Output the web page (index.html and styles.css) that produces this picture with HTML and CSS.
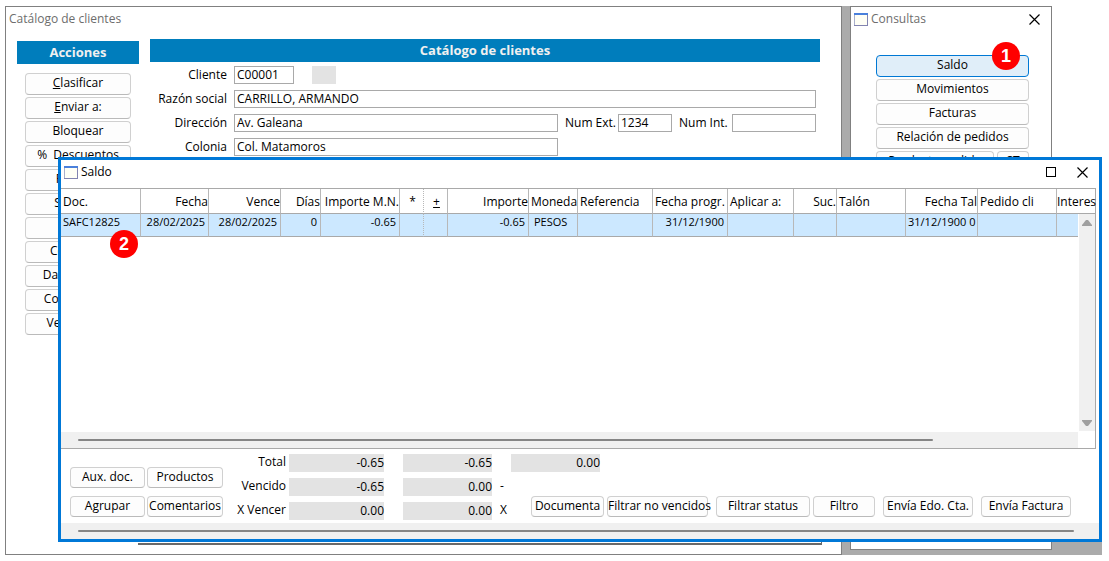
FILE: index.html
```html
<!DOCTYPE html>
<html lang="es">
<head>
    <meta charset="UTF-8">
    <meta name="viewport" content="width=device-width, initial-scale=1.0">
    <title>Catálogo de clientes</title>
    <link rel="stylesheet" href="styles.css">
</head>
<body>
    <div class="desktop">
        <div class="backdrop"></div>
        <div class="backdrop-strip"></div>

        <section class="window catalog">
            <div class="titlebar muted">Catálogo de clientes</div>
            <div class="catalog-body">
                <div class="actions">
                    <h2 class="banner">Acciones</h2>
                    <div class="action-list">
                        <button class="btn"><u>C</u>lasificar</button>
                        <button class="btn"><u>E</u>nviar a:</button>
                        <button class="btn">Bloquear</button>
                        <button class="btn">%&nbsp; Descuentos</button>
                        <button class="btn">Pedidos</button>
                        <button class="btn">Sucursal</button>
                        <button class="btn">Fax</button>
                        <button class="btn">Contactos</button>
                        <button class="btn">Datos extras</button>
                        <button class="btn">Condiciones</button>
                        <button class="btn">Ver archivo</button>
                    </div>
                </div>
                <div class="client">
                    <h1 class="banner">Catálogo de clientes</h1>
                    <form class="form">
                        <div class="row">
                            <label class="lead" for="cliente">Cliente</label>
                            <input class="w-code" id="cliente" value="C00001">
                            <span class="swatch"></span>
                        </div>
                        <div class="row">
                            <label class="lead" for="razon">Razón social</label>
                            <input class="grow" id="razon" value="CARRILLO, ARMANDO">
                        </div>
                        <div class="row">
                            <label class="lead" for="direccion">Dirección</label>
                            <input class="grow" id="direccion" value="Av. Galeana">
                            <div class="numbers">
                                <label class="w-num" for="numext">Num Ext.</label>
                                <input class="w-ext" id="numext" value="1234">
                                <label class="w-num" for="numint">Num Int.</label>
                                <input class="w-int" id="numint" value="">
                            </div>
                        </div>
                        <div class="row">
                            <label class="lead" for="colonia">Colonia</label>
                            <input class="grow" id="colonia" value="Col. Matamoros">
                            <div class="numbers"></div>
                        </div>
                    </form>
                    <div class="panel-edge"></div>
                </div>
            </div>
        </section>

        <section class="window queries">
            <div class="titlebar muted">
                <svg class="app-icon" width="14" height="13" viewBox="0 0 14 13"><rect width="14" height="13" fill="#8284b0"/><rect width="13" height="12" fill="#a9b0cc"/><rect x="1" y="2" width="12" height="10" fill="#fffff5"/><rect width="14" height="2" fill="#4a80dc"/></svg>
                <span>Consultas</span>
                <button class="win-btn" aria-label="Cerrar"><svg width="11" height="11" viewBox="0 0 11 11"><path d="M.5.5l10 10M10.5.5l-10 10" stroke="#000" stroke-width="1.2"/></svg></button>
            </div>
            <div class="query-list">
                <button class="btn active">Saldo</button>
                <button class="btn">Movimientos</button>
                <button class="btn">Facturas</button>
                <button class="btn">Relación de pedidos</button>
                <div class="pair">
                    <button class="btn">Producto pedido</button>
                    <button class="btn small">ST</button>
                </div>
            </div>
            <span class="badge badge-1">1</span>
        </section>

        <section class="dialog">
            <div class="titlebar">
                <svg class="app-icon" width="14" height="13" viewBox="0 0 14 13"><rect width="14" height="13" fill="#8284b0"/><rect width="13" height="12" fill="#a9b0cc"/><rect x="1" y="2" width="12" height="10" fill="#fffff5"/><rect width="14" height="2" fill="#4a80dc"/></svg>
                <span>Saldo</span>
                <button class="win-btn" aria-label="Maximizar"><svg width="10" height="10" viewBox="0 0 10 10"><rect x=".5" y=".5" width="9" height="9" fill="none" stroke="#000"/></svg></button>
                <button class="win-btn" aria-label="Cerrar"><svg width="11" height="11" viewBox="0 0 11 11"><path d="M.5.5l10 10M10.5.5l-10 10" stroke="#000" stroke-width="1.2"/></svg></button>
            </div>

            <div class="grid">
                <table>
                    <colgroup>
                        <col class="c-doc"><col class="c-fecha"><col class="c-vence"><col class="c-dias"><col class="c-mn">
                        <col class="c-mark"><col class="c-mark"><col class="c-imp"><col class="c-mon"><col class="c-ref">
                        <col class="c-ref"><col class="c-apl"><col class="c-suc"><col class="c-talon"><col class="c-vence">
                        <col class="c-ped"><col>
                    </colgroup>
                    <thead>
                        <tr>
                            <th>Doc.</th>
                            <th class="num">Fecha</th>
                            <th class="num">Vence</th>
                            <th class="num">Días</th>
                            <th class="num">Importe M.N.</th>
                            <th class="mid dotted">*</th>
                            <th class="mid"><u>+</u></th>
                            <th class="num">Importe</th>
                            <th>Moneda</th>
                            <th>Referencia</th>
                            <th>Fecha progr.</th>
                            <th>Aplicar a:</th>
                            <th class="num">Suc.</th>
                            <th>Talón</th>
                            <th class="num">Fecha Tal</th>
                            <th>Pedido cli</th>
                            <th>Interes</th>
                        </tr>
                    </thead>
                    <tbody>
                        <tr>
                            <td>SAFC12825</td>
                            <td class="num">28/02/2025</td>
                            <td class="num">28/02/2025</td>
                            <td class="num">0</td>
                            <td class="num">-0.65</td>
                            <td class="dotted"></td>
                            <td></td>
                            <td class="num">-0.65</td>
                            <td class="currency">PESOS</td>
                            <td></td>
                            <td class="num">31/12/1900</td>
                            <td></td>
                            <td></td>
                            <td></td>
                            <td class="num">31/12/1900 0</td>
                            <td></td>
                            <td></td>
                        </tr>
                    </tbody>
                </table>
                <div class="vscroll">
                    <svg width="10" height="6" viewBox="0 0 10 6"><path d="M4 0h2l4 5v1H0V5z" fill="#a0a0a0"/></svg>
                    <svg width="10" height="6" viewBox="0 0 10 6"><path d="M0 0h10v1L6 6H4L0 1z" fill="#a0a0a0"/></svg>
                </div>
                <div class="hscroll table-scroll"><div class="thumb"></div></div>
            </div>

            <div class="footer">
                <div class="doc-buttons">
                    <button class="btn">Aux. doc.</button>
                    <button class="btn">Productos</button>
                    <button class="btn">Agrupar</button>
                    <button class="btn">Comentarios</button>
                </div>
                <div class="totals">
                    <span class="name">Total</span><output>-0.65</output><output>-0.65</output><output>0.00</output>
                    <span class="name">Vencido</span><output>-0.65</output><output>0.00</output><span class="sign">-</span>
                    <span class="name">X Vencer</span><output>0.00</output><output>0.00</output><span class="sign">X</span>
                </div>
                <div class="filters">
                    <div class="group">
                        <button class="btn w-documenta">Documenta</button>
                        <button class="btn w-vencidos">Filtrar no vencidos</button>
                    </div>
                    <div class="group">
                        <button class="btn w-status">Filtrar status</button>
                        <button class="btn w-filtro">Filtro</button>
                    </div>
                    <button class="btn w-envia">Envía Edo. Cta.</button>
                    <button class="btn w-envia">Envía Factura</button>
                </div>
            </div>
            <div class="hscroll dialog-scroll"><div class="thumb"></div></div>
            <span class="badge badge-2">2</span>
        </section>
    </div>
</body>
</html>
```

FILE: styles.css
```css
* {
    box-sizing: border-box;
}
body {
    margin: 0;
    background: #fff;
    color: #000;
    font-family: "Segoe UI", "Open Sans", "Noto Sans", sans-serif;
    font-size: 12px;
    line-height: 16px;
}
button, input {
    font: inherit;
    color: inherit;
}
svg {
    display: block;
}

/* desktop and windows */
.desktop {
    position: relative;
    min-height: 100vh;
    overflow: hidden;
}
.backdrop {
    position: absolute;
    top: 6px;
    right: 57px;
    bottom: 6px;
    width: 210px;
    background: #ababab;
}
.backdrop-strip {
    position: absolute;
    right: 7px;
    bottom: 6px;
    width: 60px;
    height: 16px;
    background: #ababab;
}
.window {
    position: absolute;
    top: 6px;
    background: #fff;
    border: 1px solid #808080;
}
.catalog {
    left: 5px;
    right: 267px;
    bottom: 6px;
    display: flex;
    flex-direction: column;
}
.queries {
    right: 57px;
    bottom: 11px;
    width: 202px;
}
.titlebar {
    display: flex;
    align-items: center;
    gap: 3px;
    height: 24px;
    padding: 0 2px 0 3px;
}
.muted {
    color: #6d6d6d;
}
.win-btn {
    display: flex;
    align-items: center;
    justify-content: center;
    width: 29px;
    height: 22px;
    padding: 0;
    border: none;
    background: none;
}
.titlebar span {
    flex: 1;
}

/* buttons */
.btn {
    height: 22px;
    padding: 0 0 2px;
    border: 1px solid #d0d0d0;
    border-bottom-color: #bababa;
    border-radius: 4px;
    background: #fdfdfd;
    line-height: 16px;
    text-align: center;
    white-space: nowrap;
}
.btn.active {
    border-color: #0078d4;
    background: #e0eef9;
}

/* catalog window */
.catalog-body {
    flex: 1;
    display: flex;
    gap: 11px;
    padding: 8px 21px 9px 11px;
}
.banner {
    margin: 0;
    background: #007dbc;
    color: #f0f0f0;
    font-size: 13px;
    font-weight: bold;
    line-height: 23px;
    text-align: center;
}
.actions {
    width: 122px;
    padding-top: 2px;
}
.action-list {
    display: flex;
    flex-direction: column;
    gap: 2px;
    padding: 9px 8px;
}
.client {
    flex: 1;
    display: flex;
    flex-direction: column;
}
.form {
    display: flex;
    flex-direction: column;
    gap: 6px;
    padding: 4px 4px 0 0;
}
.row, .numbers {
    display: flex;
    align-items: center;
}
.row input {
    min-width: 0;
    height: 18px;
    padding: 0 2px 2px;
    border: 1px solid #a9a9a9;
    border-radius: 0;
    background: #fff;
}
.lead {
    width: 84px;
    padding-right: 7px;
    text-align: right;
}
.grow {
    flex: 1;
}
.numbers {
    width: 258px;
    padding-left: 7px;
}
.w-code {
    width: 60px;
}
.w-num {
    width: 53px;
    white-space: nowrap;
}
.w-ext {
    width: 54px;
    margin-right: 7px;
}
.w-int {
    flex: 1;
}
.swatch {
    width: 24px;
    height: 18px;
    margin-left: 18px;
    background: #e3e3e3;
}
.panel-edge {
    height: 4px;
    margin: auto -2px 0 -12px;
    border-right: 1px solid #696969;
    border-bottom: 2px solid #696969;
}

/* queries window */
.query-list {
    display: flex;
    flex-direction: column;
    gap: 2px;
    padding: 24px 22px 0 25px;
}
.pair {
    display: flex;
    gap: 3px;
}
.pair .btn {
    flex: 1;
}
.pair .small {
    flex: none;
    width: 32px;
}

/* balance dialog */
.dialog {
    position: absolute;
    top: 157px;
    left: 58px;
    right: 7px;
    bottom: 19px;
    display: flex;
    flex-direction: column;
    border: 3px solid #0078d7;
    background: #fff;
}
.dialog .titlebar {
    height: 28px;
    padding-bottom: 4px;
}
.grid {
    position: relative;
    flex: 1;
    display: flex;
    flex-direction: column;
    margin-right: 3px;
    border: 1px solid #a9a9a9;
    border-left: none;
}
table {
    width: 100%;
    table-layout: fixed;
    border-collapse: separate;
    border-spacing: 0;
}
th, td {
    border-right: 1px solid #b8b8b8;
    border-bottom: 1px solid #a9a9a9;
    font-weight: normal;
    text-align: left;
    white-space: nowrap;
}
th {
    height: 25px;
    padding: 2px 0 0 2px;
}
td {
    height: 22px;
    padding: 0 3px 6px 2px;
    background: #cce8ff;
    font-size: 11px;
}
th:last-child, td:last-child {
    border-right: none;
}
th:last-child {
    padding-left: 0;
}
td.currency {
    padding-left: 5px;
}
.num {
    text-align: right;
}
.mid {
    text-align: center;
}
.dotted {
    border-right-style: dotted;
}
.c-doc { width: 80px; }
.c-fecha { width: 68px; }
.c-vence { width: 72px; }
.c-dias { width: 40px; }
.c-mn { width: 79px; }
.c-mark { width: 24px; }
.c-imp { width: 81px; }
.c-mon { width: 49px; }
.c-ref { width: 75px; }
.c-apl { width: 66px; }
.c-suc { width: 43px; }
.c-talon { width: 69px; }
.c-ped { width: 79px; }

.vscroll {
    position: absolute;
    top: 25px;
    right: 0;
    bottom: 17px;
    width: 17px;
    display: flex;
    flex-direction: column;
    justify-content: space-between;
    align-items: center;
    padding: 6px 0 5px;
    border-left: 1px solid #fff;
    background: #f0f0f0;
}
.hscroll {
    height: 16px;
    padding: 7px 0 0 17px;
    background: #f0f0f0;
}
.thumb {
    height: 2px;
    border-radius: 1px;
    background: #858585;
}
.table-scroll {
    margin: auto 17px 0 0;
    padding-right: 145px;
}
.dialog-scroll {
    padding-right: 25px;
}

.footer {
    display: flex;
    padding: 5px 7px 3px 9px;
}
.doc-buttons {
    display: grid;
    grid-template-columns: 75px 76px;
    gap: 8px 2px;
    align-content: end;
    padding-bottom: 3px;
}
.footer .btn {
    height: 21px;
}
.totals {
    display: grid;
    grid-template-columns: 31px 95px 89px 89px;
    gap: 6px 19px;
    margin-left: 16px;
}
.totals .name {
    display: flex;
    justify-content: flex-end;
    margin-right: -16px;
    white-space: nowrap;
}
.totals output {
    height: 18px;
    background: #e3e3e3;
    line-height: 18px;
    text-align: right;
}
.sign {
    margin-left: -11px;
}
/* the filter row reaches in under the last total */
.filters {
    flex: 1;
    display: flex;
    justify-content: flex-end;
    align-items: flex-end;
    gap: 8px;
    margin-left: -80px;
    padding: 0 21px 3px 0;
}
.filters .btn {
    flex: none;
}
.group {
    display: flex;
    gap: 3px;
}
.w-documenta { width: 73px; }
.w-vencidos { width: 101px; }
.w-status { width: 94px; }
.w-filtro { width: 62px; }
.w-envia { width: 90px; }

/* numbered callouts */
.badge {
    position: absolute;
    width: 28px;
    height: 28px;
    border-radius: 50%;
    background: #f00;
    color: #fff;
    font-family: "Liberation Sans", sans-serif;
    font-size: 18px;
    font-weight: bold;
    line-height: 28px;
    text-align: center;
}
.badge-1 {
    top: 35px;
    right: 31px;
}
.badge-2 {
    top: 70px;
    left: 49px;
}
```
